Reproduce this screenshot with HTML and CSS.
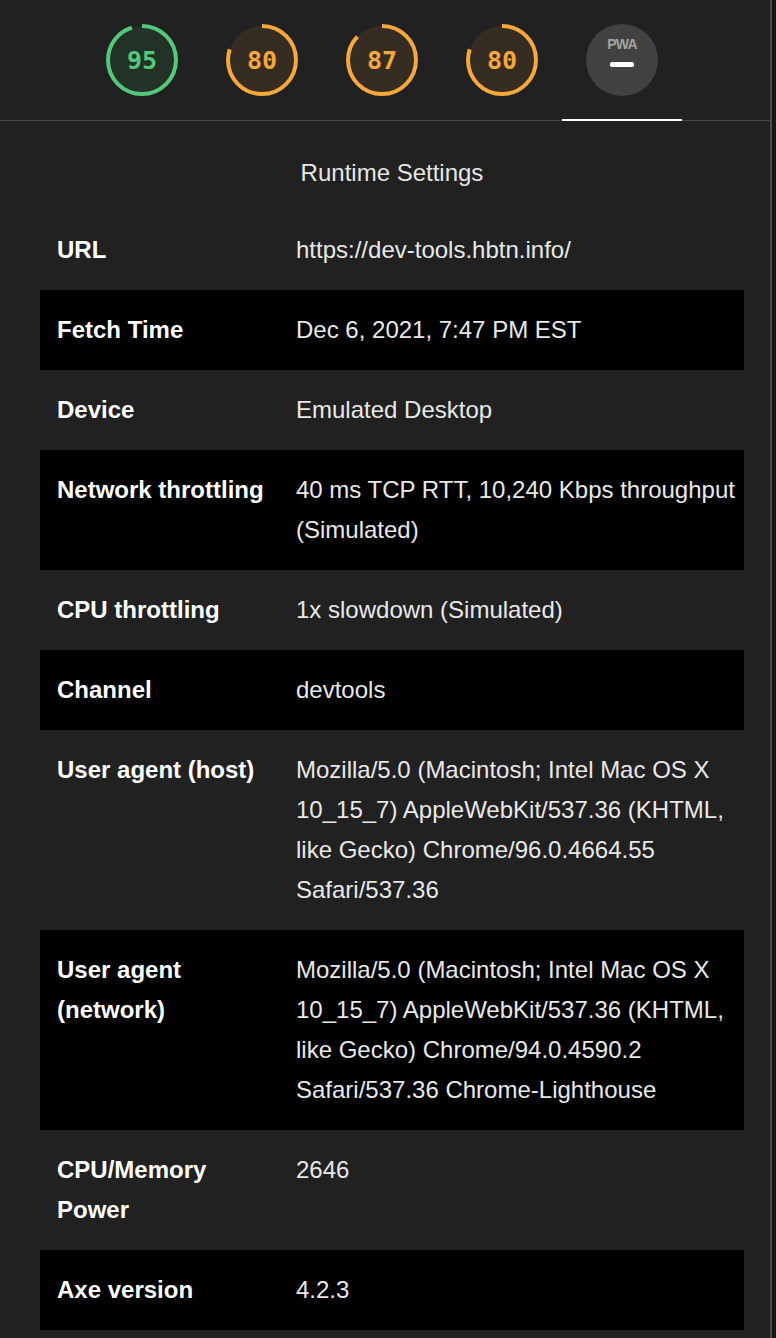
FILE: index.html
```html
<!DOCTYPE html>
<html lang="en">
<head>
<meta charset="utf-8">
<title>Runtime Settings</title>
<link rel="stylesheet" href="styles.css">
</head>
<body>
<div class="page">
  <nav class="tabs">
    <div class="tab">
      <div class="gauge gauge--pass">
        <svg class="gauge__svg" viewBox="0 0 72 72" width="72" height="72">
          <circle class="gauge__base" cx="36" cy="36" r="34"></circle>
          <circle class="gauge__arc" cx="36" cy="36" r="34" stroke-dasharray="202.9 213.6" transform="rotate(-90 36 36)"></circle>
        </svg>
        <span class="gauge__num">95</span>
      </div>
    </div>
    <div class="tab">
      <div class="gauge gauge--avg">
        <svg class="gauge__svg" viewBox="0 0 72 72" width="72" height="72">
          <circle class="gauge__base" cx="36" cy="36" r="34"></circle>
          <circle class="gauge__arc" cx="36" cy="36" r="34" stroke-dasharray="170.9 213.6" transform="rotate(-90 36 36)"></circle>
        </svg>
        <span class="gauge__num">80</span>
      </div>
    </div>
    <div class="tab">
      <div class="gauge gauge--avg">
        <svg class="gauge__svg" viewBox="0 0 72 72" width="72" height="72">
          <circle class="gauge__base" cx="36" cy="36" r="34"></circle>
          <circle class="gauge__arc" cx="36" cy="36" r="34" stroke-dasharray="185.8 213.6" transform="rotate(-90 36 36)"></circle>
        </svg>
        <span class="gauge__num">87</span>
      </div>
    </div>
    <div class="tab">
      <div class="gauge gauge--avg">
        <svg class="gauge__svg" viewBox="0 0 72 72" width="72" height="72">
          <circle class="gauge__base" cx="36" cy="36" r="34"></circle>
          <circle class="gauge__arc" cx="36" cy="36" r="34" stroke-dasharray="170.9 213.6" transform="rotate(-90 36 36)"></circle>
        </svg>
        <span class="gauge__num">80</span>
      </div>
    </div>
    <div class="tab tab--active">
      <div class="pwa">
        <span class="pwa__label">PWA</span>
        <span class="pwa__dash"></span>
      </div>
    </div>
  </nav>

  <section class="settings">
    <h2 class="settings__title">Runtime Settings</h2>
    <div class="env">
      <div class="env__row">
        <div class="env__name">URL</div>
        <div class="env__value">https://dev-tools.hbtn.info/</div>
      </div>
      <div class="env__row env__row--alt">
        <div class="env__name">Fetch Time</div>
        <div class="env__value">Dec 6, 2021, 7:47 PM EST</div>
      </div>
      <div class="env__row">
        <div class="env__name">Device</div>
        <div class="env__value">Emulated Desktop</div>
      </div>
      <div class="env__row env__row--alt">
        <div class="env__name">Network throttling</div>
        <div class="env__value">40 ms TCP RTT, 10,240 Kbps throughput (Simulated)</div>
      </div>
      <div class="env__row">
        <div class="env__name">CPU throttling</div>
        <div class="env__value">1x slowdown (Simulated)</div>
      </div>
      <div class="env__row env__row--alt">
        <div class="env__name">Channel</div>
        <div class="env__value">devtools</div>
      </div>
      <div class="env__row">
        <div class="env__name">User agent (host)</div>
        <div class="env__value">Mozilla/5.0 (Macintosh; Intel Mac OS X 10_15_7) AppleWebKit/537.36 (KHTML, like Gecko) Chrome/96.0.4664.55 Safari/537.36</div>
      </div>
      <div class="env__row env__row--alt">
        <div class="env__name">User agent (network)</div>
        <div class="env__value">Mozilla/5.0 (Macintosh; Intel Mac OS X 10_15_7) AppleWebKit/537.36 (KHTML, like Gecko) Chrome/94.0.4590.2 Safari/537.36 Chrome-Lighthouse</div>
      </div>
      <div class="env__row">
        <div class="env__name">CPU/Memory Power</div>
        <div class="env__value">2646</div>
      </div>
      <div class="env__row env__row--alt">
        <div class="env__name">Axe version</div>
        <div class="env__value">4.2.3</div>
      </div>
    </div>
  </section>
</div>
</body>
</html>
```

FILE: styles.css
```css
html, body {
  margin: 0;
  padding: 0;
}

body {
  background: #161616;
  font-family: "Liberation Sans", Arial, sans-serif;
  color: #e8e8e8;
}

.page {
  width: 770px;
  min-height: 100vh;
  background: #212121;
  border-right: 2px solid #4c4c4c;
}

.tabs {
  display: flex;
  height: 120px;
  padding-left: 82px;
  border-bottom: 1px solid #474747;
}

.tab {
  width: 120px;
  height: 121px;
  margin-bottom: -1px;
  box-sizing: border-box;
  display: flex;
  align-items: center;
  justify-content: center;
  border-bottom: 2px solid transparent;
}

.tab--active {
  border-bottom-color: #ffffff;
}

.gauge {
  position: relative;
  width: 72px;
  height: 72px;
  display: flex;
  align-items: center;
  justify-content: center;
  margin-top: 1px;
}

.gauge__svg {
  position: absolute;
  left: 0;
  top: 0;
}

.gauge__base {
  stroke: none;
}

.gauge__arc {
  fill: none;
  stroke-width: 4;
}

.gauge--pass .gauge__base { fill: #243127; }
.gauge--pass .gauge__arc { stroke: #52c97a; }
.gauge--pass .gauge__num { color: #52c97a; }

.gauge--avg .gauge__base { fill: #352c22; }
.gauge--avg .gauge__arc { stroke: #f6a838; }
.gauge--avg .gauge__num { color: #f6a838; }

.gauge__num {
  position: relative;
  font-family: "DejaVu Sans Mono", "Liberation Mono", monospace;
  font-size: 25px;
  font-weight: bold;
  line-height: 1;
}

.pwa {
  width: 72px;
  height: 72px;
  border-radius: 50%;
  background: #424242;
  display: flex;
  flex-direction: column;
  align-items: center;
  margin-top: 1px;
}

.pwa__label {
  margin-top: 13px;
  font-family: "Liberation Sans", Arial, sans-serif;
  font-weight: bold;
  font-size: 14px;
  line-height: 14px;
  letter-spacing: -0.8px;
  color: #a3a3a3;
}

.pwa__dash {
  margin-top: 11px;
  width: 24px;
  height: 5px;
  border-radius: 2px;
  background: #ffffff;
}

.settings {
  padding: 0 26px 0 40px;
}

.settings__title {
  margin: 32px 0 17px;
  font-size: 24px;
  line-height: 40px;
  font-weight: normal;
  text-align: center;
  color: #e6e6e6;
}

.env__row {
  display: grid;
  grid-template-columns: 256px 1fr;
  font-size: 24px;
  line-height: 40px;
}

.env__row--alt {
  background: #000000;
}

.env__name {
  padding: 20px 29px 20px 17px;
  font-weight: bold;
  color: #ffffff;
}

.env__value {
  padding: 20px 0;
  color: #e8e8e8;
}
```
